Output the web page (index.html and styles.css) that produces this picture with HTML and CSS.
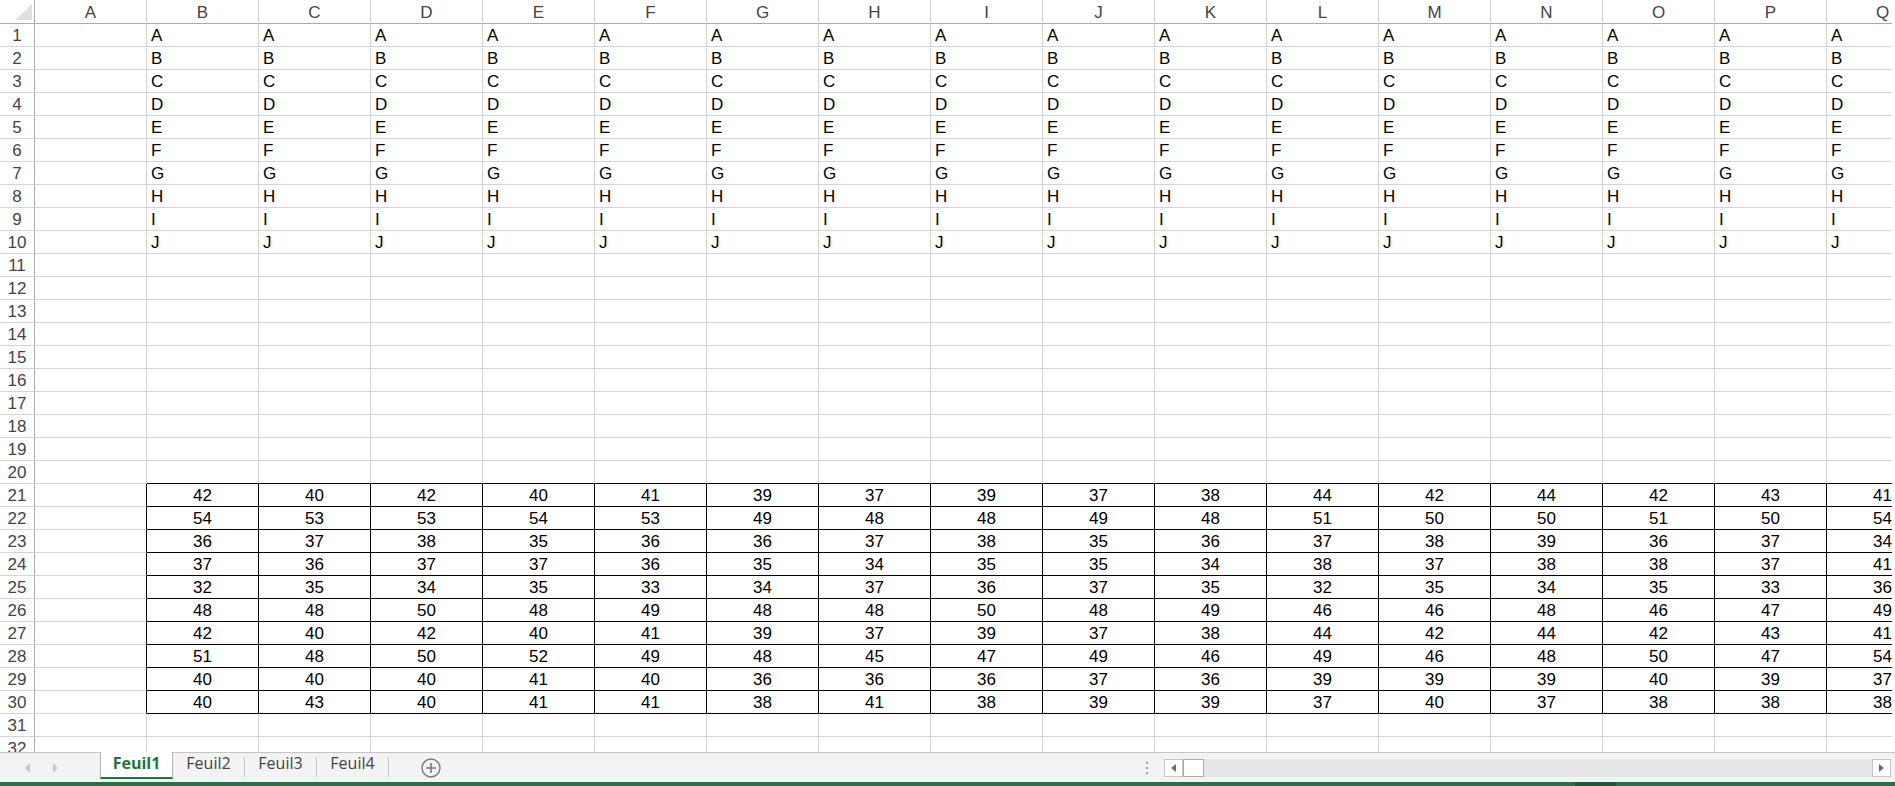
FILE: index.html
```html
<!DOCTYPE html>
<html lang="fr">
<head>
    <meta charset="UTF-8">
    <meta name="viewport" content="width=device-width, initial-scale=1.0">
    <title>Feuil1</title>
    <link rel="stylesheet" href="styles.css">
</head>
<body>
    <div class="sheet" id="sheet"></div>

    <div class="tabbar">
        <div class="tab-nav">
            <span class="arrow arrow-left"></span>
            <span class="arrow arrow-right"></span>
        </div>
        <div class="tab active">Feuil1</div>
        <div class="tab">Feuil2</div>
        <div class="tab">Feuil3</div>
        <div class="tab">Feuil4</div>
        <svg class="add-sheet" width="20" height="20" viewBox="0 0 20 20">
            <circle cx="10" cy="10" r="9" fill="none" stroke="#7a7a7a" stroke-width="1.4"/>
            <path d="M10 5v10M5 10h10" stroke="#7a7a7a" stroke-width="1.6"/>
        </svg>
        <div class="hscroll">
            <div class="grip"><span></span><span></span><span></span></div>
            <div class="scrollbar">
                <div class="sb-btn"><span class="sb-left"></span></div>
                <div class="sb-thumb"></div>
                <div class="sb-track"></div>
                <div class="sb-btn"><span class="sb-right"></span></div>
            </div>
        </div>
    </div>

    <div class="statusbar"><span class="status-mark"></span></div>

    <script>
        const columns = 'ABCDEFGHIJKLMNOPQ'.split('');
        const rowCount = 32;

        // B21:Q30
        const values = [
            [42, 40, 42, 40, 41, 39, 37, 39, 37, 38, 44, 42, 44, 42, 43, 41],
            [54, 53, 53, 54, 53, 49, 48, 48, 49, 48, 51, 50, 50, 51, 50, 54],
            [36, 37, 38, 35, 36, 36, 37, 38, 35, 36, 37, 38, 39, 36, 37, 34],
            [37, 36, 37, 37, 36, 35, 34, 35, 35, 34, 38, 37, 38, 38, 37, 41],
            [32, 35, 34, 35, 33, 34, 37, 36, 37, 35, 32, 35, 34, 35, 33, 36],
            [48, 48, 50, 48, 49, 48, 48, 50, 48, 49, 46, 46, 48, 46, 47, 49],
            [42, 40, 42, 40, 41, 39, 37, 39, 37, 38, 44, 42, 44, 42, 43, 41],
            [51, 48, 50, 52, 49, 48, 45, 47, 49, 46, 49, 46, 48, 50, 47, 54],
            [40, 40, 40, 41, 40, 36, 36, 36, 37, 36, 39, 39, 39, 40, 39, 37],
            [40, 43, 40, 41, 41, 38, 41, 38, 39, 39, 37, 40, 37, 38, 38, 38]
        ];

        const sheet = document.getElementById('sheet');

        const addCell = (cls, text) => {
            const div = document.createElement('div');
            div.className = 'cell ' + cls;
            div.textContent = text;
            sheet.appendChild(div);
        };

        addCell('corner', '');
        columns.forEach(c => addCell('col-head', c));

        for (let r = 1; r <= rowCount; r++) {
            addCell('row-head', r);
            const inBox = r >= 21 && r <= 30;
            for (let c = 0; c < columns.length; c++) {
                if (c === 0) {
                    addCell(inBox ? 'box-left' : '', '');
                    continue;
                }
                if (r <= 10) {
                    addCell('', String.fromCharCode(64 + r));
                } else if (r === 20) {
                    addCell('box-top', '');
                } else if (inBox) {
                    addCell('num', values[r - 21][c - 1]);
                } else {
                    addCell('', '');
                }
            }
        }
    </script>
</body>
</html>
```

FILE: styles.css
```css
* {
    box-sizing: border-box;
}
body {
    margin: 0;
    width: 1895px;
    height: 786px;
    overflow: hidden;
    background-color: #fff;
    font-family: "Liberation Sans", Arial, sans-serif;
}

/* grid */
.sheet {
    width: 1892px;
    height: 752px;
    overflow: hidden;
    display: grid;
    grid-template-columns: 35px repeat(17, 112px);
    grid-template-rows: 24px;
    grid-auto-rows: 23px;
}
.cell {
    border-right: 1px solid #d4d4d4;
    border-bottom: 1px solid #d4d4d4;
    padding: 0 4px;
    font-size: 17px;
    line-height: 24px;
    color: #000;
    white-space: nowrap;
    overflow: hidden;
}
.corner {
    border-right-color: #ababab;
    border-bottom-color: #ababab;
    background: linear-gradient(to bottom right, transparent 50%, #dfdfdf 50%) no-repeat 16px 4px / 16px 16px;
}
.col-head {
    padding: 0;
    text-align: center;
    color: #444;
    line-height: 26px;
    border-bottom-color: #ababab;
}
.row-head {
    padding: 0;
    text-align: center;
    color: #444;
    border-right-color: #ababab;
}
.num {
    text-align: center;
    border-right-color: #000;
    border-bottom-color: #000;
}
.box-top {
    border-bottom-color: #000;
}
.box-left {
    border-right-color: #000;
}

/* sheet tabs */
.tabbar {
    height: 30px;
    border-top: 1px solid #c6c6c6;
    background-color: #f3f3f3;
    display: flex;
    align-items: flex-start;
    font-family: "Open Sans", sans-serif;
    font-size: 16px;
    color: #444;
}
.tab-nav {
    width: 100px;
    height: 29px;
    display: flex;
    align-items: center;
    padding-left: 25px;
    gap: 23px;
}
.arrow {
    width: 0;
    height: 0;
    border-top: 5px solid transparent;
    border-bottom: 5px solid transparent;
}
.arrow-left {
    border-right: 5px solid #c8c8c8;
}
.arrow-right {
    border-left: 5px solid #c8c8c8;
}
.tab {
    width: 72px;
    height: 20px;
    margin-top: 4px;
    border-right: 1px solid #c6c6c6;
    text-align: center;
    line-height: 12px;
}
.tab.active {
    width: 73px;
    height: 27px;
    margin-top: -1px;
    background-color: #fff;
    border-left: 1px solid #b4b4b4;
    border-right: 1px solid #b4b4b4;
    border-bottom: 2px solid #217346;
    color: #217346;
    font-weight: bold;
    line-height: 22px;
}
.add-sheet {
    margin-left: 32px;
    margin-top: 5px;
}

/* horizontal scrollbar */
.hscroll {
    margin-left: auto;
    margin-right: 4px;
    height: 29px;
    display: flex;
    align-items: center;
    gap: 16px;
}
.grip {
    display: flex;
    flex-direction: column;
    gap: 3px;
}
.grip span {
    width: 2px;
    height: 2px;
    background-color: #a0a0a0;
}
.scrollbar {
    width: 727px;
    height: 18px;
    display: flex;
    background-color: #e6e6e6;
}
.sb-btn {
    width: 19px;
    height: 18px;
    background-color: #fff;
    border: 1px solid #c6c6c6;
    display: flex;
    justify-content: center;
    align-items: center;
}
.sb-left, .sb-right {
    width: 0;
    height: 0;
    border-top: 4.5px solid transparent;
    border-bottom: 4.5px solid transparent;
}
.sb-left {
    border-right: 5px solid #6d6d6d;
}
.sb-right {
    border-left: 5px solid #6d6d6d;
}
.sb-thumb {
    width: 21px;
    height: 18px;
    background-color: #fff;
    border: 1px solid #ababab;
}
.sb-track {
    flex: 1;
}

/* status bar strip */
.statusbar {
    height: 4px;
    background-color: #217346;
    display: flex;
    padding-left: 1575px;
}
.status-mark {
    width: 41px;
    background-color: #185c37;
}
```
